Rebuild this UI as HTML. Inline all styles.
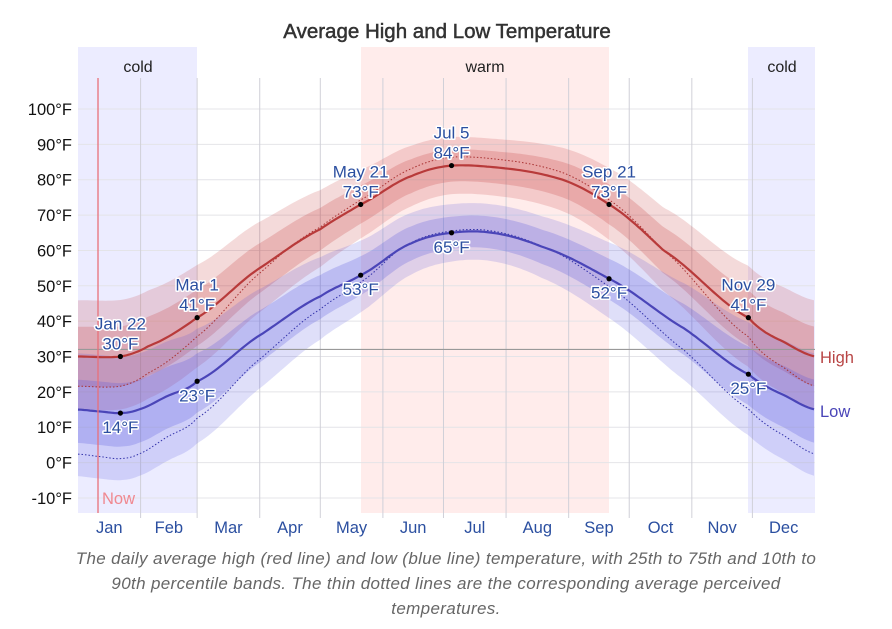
<!DOCTYPE html>
<html><head><meta charset="utf-8"><style>
html,body{margin:0;padding:0;background:#fff;width:892px;height:629px;overflow:hidden}
svg{display:block}
.cap{position:absolute;left:56px;top:546px;width:780px;text-align:center;font:italic 17px/25px "Liberation Sans",sans-serif;letter-spacing:0.35px;color:#666}
</style></head><body>
<svg id="s" width="892" height="629" xmlns="http://www.w3.org/2000/svg" font-family="Liberation Sans, sans-serif"></svg>
<div class="cap">The daily average high (red line) and low (blue line) temperature, with 25th to 75th and 10th to 90th percentile bands. The thin dotted lines are the corresponding average perceived temperatures.</div>
<script>
const X0=78,X1=815,PD=(X1-X0)/365;
const x=d=>X0+d*PD, y=t=>109+(100-t)*3.536;
function interp(pts){return d=>{for(let i=0;i<pts.length-1;i++){const[a,va]=pts[i],[b,vb]=pts[i+1];if(d>=a&&d<=b){const p0=pts[Math.max(0,i-1)][1],p3=pts[Math.min(pts.length-1,i+2)][1];const t=(d-a)/(b-a);const m1=(vb-p0)/2,m2=(p3-va)/2;const t2=t*t,t3=t2*t;return (2*t3-3*t2+1)*va+(t3-2*t2+t)*m1*0.9+(-2*t3+3*t2)*vb+(t3-t2)*m2*0.9;}}return pts[pts.length-1][1];}}
const H=interp([[0,30],[21,30],[35,33],[59,41],[90,55],[120,66],[140,73],[165,81],[185,84],[215,83],[240,80],[263,73],[290,60],[332,41],[350,34],[365,30]]);
const L=interp([[0,15],[10,14.5],[21,14],[30,15],[45,19],[59,23],[90,36],[120,47],[140,53],[165,62],[185,65],[205,65],[230,61],[263,52],[300,38],[332,25],[350,19],[365,15]]);
const s=d=>(1+Math.cos(2*Math.PI*(d-15)/365))/2;
const P=t=>t>60?t+(t-60)*0.1:t-(60-t)*0.28;
const N=[];for(let d=0;d<=365;d+=1.5)N.push(d);
const line=f=>N.map((d,i)=>(i?'L':'M')+x(d).toFixed(1)+' '+y(f(d)).toFixed(1)).join('');
const band=(f,g)=>line(f)+N.slice().reverse().map(d=>'L'+x(d).toFixed(1)+' '+y(g(d)).toFixed(1)).join('')+'Z';
let o='';
o+=`<rect x="78" y="47" width="119" height="466" fill="#ececff"/><rect x="748" y="47" width="67" height="466" fill="#ececff"/><rect x="361" y="47" width="248" height="466" fill="#ffeceb"/>`;
o+=`<text x="138" y="72" font-size="16" text-anchor="middle" fill="#222">cold</text><text x="485" y="72" font-size="16" text-anchor="middle" fill="#222">warm</text><text x="782" y="72" font-size="16" text-anchor="middle" fill="#222">cold</text>`;
for(let t=-10;t<=100;t+=10){o+=`<line x1="78" x2="815" y1="${y(t)}" y2="${y(t)}" stroke="#e4e4e8"/><text x="72" y="${y(t)+6}" font-size="16.5" text-anchor="end" fill="#111">${t}°F</text>`;}
const md=[31,59,90,120,151,181,212,243,273,304,334];
md.forEach(d=>o+=`<line x1="${x(d)}" x2="${x(d)}" y1="78" y2="518" stroke="#d0d0d8"/>`);
const mn=['Jan','Feb','Mar','Apr','May','Jun','Jul','Aug','Sep','Oct','Nov','Dec'];const st=[0,...md,365];
mn.forEach((m,i)=>o+=`<text x="${x((st[i]+st[i+1])/2)}" y="533" font-size="16.5" text-anchor="middle" fill="#2b4fa0">${m}</text>`);
o+=`<path d="${band(d=>H(d)+8+8*s(d),d=>H(d)-8-7*s(d))}" fill="rgba(200,70,70,0.2)"/>`;
o+=`<path d="${band(d=>H(d)+4.5+4*s(d),d=>H(d)-4.5-4*s(d))}" fill="rgba(200,70,70,0.25)"/>`;
o+=`<path d="${band(d=>L(d)+8+8*s(d),d=>L(d)-8-11*s(d))}" fill="rgba(80,80,220,0.18)"/>`;
o+=`<path d="${band(d=>L(d)+4.5+4*s(d),d=>L(d)-4.5-5*s(d))}" fill="rgba(80,80,220,0.24)"/>`;
o+=`<line x1="78" x2="815" y1="${y(32)}" y2="${y(32)}" stroke="#999" stroke-width="1.2"/>`;
o+=`<path d="${line(d=>P(H(d)))}" fill="none" stroke="#a33" stroke-width="1" stroke-dasharray="1.5 2"/>`;
o+=`<path d="${line(d=>P(L(d)))}" fill="none" stroke="#33a" stroke-width="1" stroke-dasharray="1.5 2"/>`;
o+=`<path d="${line(H)}" fill="none" stroke="#b83a3a" stroke-width="2.2"/>`;
o+=`<path d="${line(L)}" fill="none" stroke="#4a45b8" stroke-width="2.2"/>`;
o+=`<line x1="98" x2="98" y1="78" y2="513" stroke="#e8707a" stroke-width="1.3"/><text x="102" y="504" font-size="16.5" fill="#f08890">Now</text>`;
const lab=(d,t,a,b,up)=>{const X=x(d),Y=y(t);o+=`<circle cx="${X}" cy="${Y}" r="2.6" fill="#000"/>`;const sty=`font-size="17" text-anchor="middle" fill="#2b4fa0" stroke="#fff" stroke-width="3" paint-order="stroke" stroke-linejoin="round"`;if(up){o+=`<text x="${X}" y="${Y-27}" ${sty}>${a}</text><text x="${X}" y="${Y-7}" ${sty}>${b}</text>`}else{o+=`<text x="${X}" y="${Y+20}" ${sty}>${b}</text>`}};
lab(21,30,'Jan 22','30°F',1);lab(59,41,'Mar 1','41°F',1);lab(140,73,'May 21','73°F',1);lab(185,84,'Jul 5','84°F',1);lab(263,73,'Sep 21','73°F',1);lab(332,41,'Nov 29','41°F',1);
lab(21,14,'','14°F',0);lab(59,23,'','23°F',0);lab(140,53,'','53°F',0);lab(185,65,'','65°F',0);lab(263,52,'','52°F',0);lab(332,25,'','25°F',0);
o+=`<text x="820" y="363" font-size="16.5" fill="#b84545">High</text><text x="820" y="417" font-size="16.5" fill="#4a45b8">Low</text>`;
o+=`<text x="447" y="38" font-size="20.5" text-anchor="middle" fill="#333" stroke="#333" stroke-width="0.5">Average High and Low Temperature</text>`;
document.getElementById('s').innerHTML=o;
</script>
</body></html>
